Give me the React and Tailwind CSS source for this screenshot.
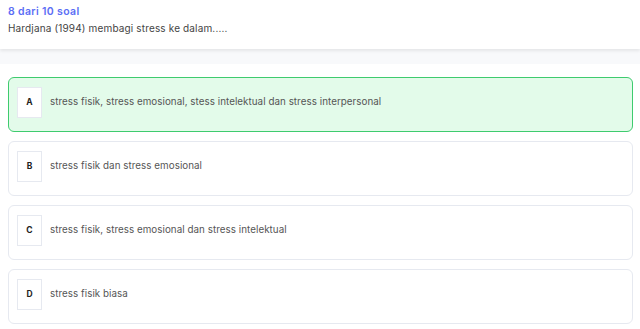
import React from 'react'

const options = [
    { key: "A", text: "stress fisik, stress emosional, stess intelektual dan stress interpersonal", selected: true },
    { key: "B", text: "stress fisik dan stress emosional" },
    { key: "C", text: "stress fisik, stress emosional dan stress intelektual" },
    { key: "D", text: "stress fisik biasa" },
]

export default function App() {
    return (
        <div className="min-h-screen bg-white font-['Inter',sans-serif]">
            {/* header soal */}
            <div className="h-[49px] bg-white px-2 pt-[5px] shadow-[0_2px_3px_rgba(0,0,0,0.08)] relative">
                <p className="text-[10.5px] font-semibold leading-[13px] tracking-[0.35px] text-[#5b6ef5]">8 dari 10 soal</p>
                <p className="mt-[4px] text-[10px] leading-[13px] tracking-[0.15px] text-[#444]">Hardjana (1994) membagi stress ke dalam.....</p>
            </div>
            <div className="h-[15px] bg-[#f8f9fb]" />

            {/* pilihan jawaban */}
            <div className="flex flex-col gap-[9px] pl-2 pr-[7px] pt-[13px]">
                {options.map((opt) => (
                    <div
                        key={opt.key}
                        className={`flex h-[55px] items-start gap-2 rounded-md border pl-2 pt-[9px] ${opt.selected ? "border-[#3ecb6e] bg-[#e3fbea]" : "border-[#e6e9f0] bg-white"}`}
                    >
                        <div className="flex h-[31px] w-[25px] items-center justify-center border border-[#e6e9f0] bg-white text-[8.5px] font-bold text-[#222]">
                            {opt.key}
                        </div>
                        <p className="pt-[8px] text-[9.8px] leading-[13px] tracking-[0.05px] text-[#555]">{opt.text}</p>
                    </div>
                ))}
            </div>
        </div>
    )
}
